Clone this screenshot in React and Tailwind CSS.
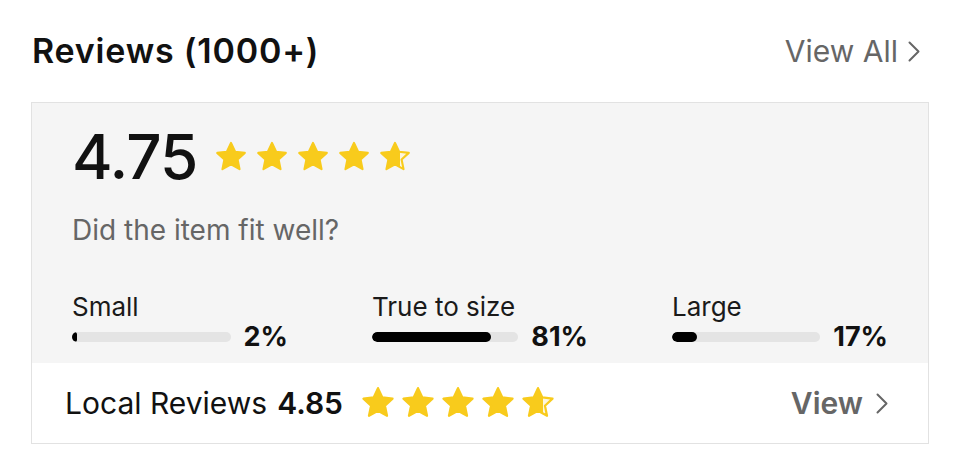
const STAR = 'M12 2.6l2.75 5.9 6.45.75-4.8 4.45 1.3 6.4L12 16.9l-5.7 3.2 1.3-6.4-4.8-4.45 6.45-.75z'

function Star({ size, fill = 1, id }) {
  return (
    <svg width={size} height={size} viewBox="0 0 24 24">
      <defs>
        <linearGradient id={id} x1="0" x2="1" y1="0" y2="0">
          <stop offset={fill} stopColor="#f8cb1c" />
          <stop offset={fill} stopColor="#fdf6dc" />
        </linearGradient>
      </defs>
      <path d={STAR} fill={`url(#${id})`} stroke="#f8cb1c" strokeWidth="1.4" strokeLinejoin="round" />
    </svg>
  )
}

function Stars({ size, gap, partial, prefix }) {
  return (
    <div className={`flex items-center ${gap}`}>
      {[1, 1, 1, 1, partial].map((f, i) => (
        <Star key={i} size={size} fill={f} id={`${prefix}-${i}`} />
      ))}
    </div>
  )
}

function Chevron() {
  return (
    <svg width="12" height="21" viewBox="0 0 12 21" fill="none">
      <polyline points="1.5,1.5 10.5,10.5 1.5,19.5" stroke="currentColor" strokeWidth="2" strokeLinecap="round" strokeLinejoin="round" />
    </svg>
  )
}

const fits = [
  { label: 'Small', pct: 2 },
  { label: 'True to size', pct: 81 },
  { label: 'Large', pct: 17 },
]

export default function App() {
  return (
    <div className="w-[960px] h-[472px] overflow-hidden bg-white text-[#111] font-['Inter',sans-serif]">
      {/* header */}
      <div className="flex items-center justify-between h-[46px] mt-[28px] pl-[32px] pr-[40px]">
        <h2 className="text-[34px] font-semibold leading-none tracking-[0.8px]">Reviews (1000+)</h2>
        <div className="flex items-center gap-[10px] text-[30px] text-[#666] leading-none">
          View All
          <Chevron />
        </div>
      </div>

      {/* card */}
      <div className="mt-[28px] ml-[31px] w-[898px] border border-[#e2e2e2]">
        <div className="bg-[#f5f5f5] px-[40px] pt-[23px] pb-[13px]">
          <div className="flex items-center gap-[16px]">
            <span className="text-[62px] font-medium leading-none tracking-[-1px]">4.75</span>
            <Stars size={36} gap="gap-[5px]" partial={0.68} prefix="top" />
          </div>
          <p className="mt-[28px] text-[28px] leading-none text-[#666]">Did the item fit well?</p>
          <div className="mt-[50px] flex justify-between">
            {fits.map(f => (
              <div key={f.label} className="w-[216px]">
                <div className="text-[26px] leading-none text-[#1a1a1a]">{f.label}</div>
                <div className="mt-[3px] flex items-center gap-[13px]">
                  <div className="flex-1 h-[10px] rounded-full bg-[#e4e4e4] overflow-hidden">
                    <div className="h-full rounded-full bg-black" style={{ width: `${Math.max(f.pct, 3)}%` }} />
                  </div>
                  <span className="text-[27px] font-bold leading-none">{f.pct}%</span>
                </div>
              </div>
            ))}
          </div>
        </div>

        <div className="flex items-center justify-between h-[80px] pl-[33px] pr-[40px] bg-white">
          <div className="flex items-center">
            <span className="text-[30px] leading-none">Local Reviews</span>
            <span className="ml-[10px] text-[30px] font-semibold leading-none">4.85</span>
            <div className="ml-[16px]">
              <Stars size={38} gap="gap-[2px]" partial={0.68} prefix="local" />
            </div>
          </div>
          <div className="flex items-center gap-[13px] text-[30px] font-semibold text-[#666] leading-none">
            View
            <Chevron />
          </div>
        </div>
      </div>
    </div>
  )
}
